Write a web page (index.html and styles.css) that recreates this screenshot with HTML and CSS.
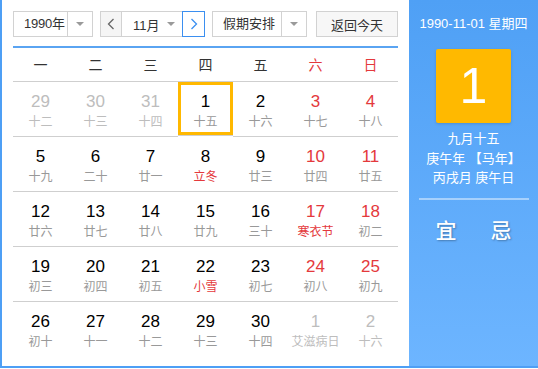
FILE: index.html
```html
<!DOCTYPE html>
<html lang="zh-CN">
<head>
<meta charset="UTF-8">
<title>万年历</title>
<link rel="stylesheet" href="styles.css">
</head>
<body>
<div class="calendar">
  <div class="main">
    <div class="toolbar">
      <div class="select year">
        <span class="select-text">1990年</span>
        <span class="select-arrow"><i class="caret"></i></span>
      </div>
      <div class="month-group">
        <span class="nav prev">
          <svg width="8" height="12" viewBox="0 0 8 12"><path d="M6.5 1 L1.5 6 L6.5 11" fill="none" stroke="#666" stroke-width="1.3"/></svg>
        </span>
        <span class="month-text">11月<i class="caret"></i></span>
        <span class="nav next">
          <svg width="8" height="12" viewBox="0 0 8 12"><path d="M1.5 1 L6.5 6 L1.5 11" fill="none" stroke="#3b8ff0" stroke-width="1.3"/></svg>
        </span>
      </div>
      <div class="select holiday">
        <span class="select-text">假期安排</span>
        <span class="select-arrow"><i class="caret"></i></span>
      </div>
      <div class="today-btn">返回今天</div>
    </div>

    <div class="week-head">
      <span>一</span><span>二</span><span>三</span><span>四</span><span>五</span>
      <span class="red">六</span><span class="red">日</span>
    </div>

    <div class="days">
      <div class="day other"><b>29</b><em>十二</em></div>
      <div class="day other"><b>30</b><em>十三</em></div>
      <div class="day other"><b>31</b><em>十四</em></div>
      <div class="day selected"><b>1</b><em>十五</em></div>
      <div class="day"><b>2</b><em>十六</em></div>
      <div class="day weekend"><b>3</b><em>十七</em></div>
      <div class="day weekend"><b>4</b><em>十八</em></div>

      <div class="day"><b>5</b><em>十九</em></div>
      <div class="day"><b>6</b><em>二十</em></div>
      <div class="day"><b>7</b><em>廿一</em></div>
      <div class="day festival"><b>8</b><em>立冬</em></div>
      <div class="day"><b>9</b><em>廿三</em></div>
      <div class="day weekend"><b>10</b><em>廿四</em></div>
      <div class="day weekend"><b>11</b><em>廿五</em></div>

      <div class="day"><b>12</b><em>廿六</em></div>
      <div class="day"><b>13</b><em>廿七</em></div>
      <div class="day"><b>14</b><em>廿八</em></div>
      <div class="day"><b>15</b><em>廿九</em></div>
      <div class="day"><b>16</b><em>三十</em></div>
      <div class="day weekend festival"><b>17</b><em>寒衣节</em></div>
      <div class="day weekend"><b>18</b><em>初二</em></div>

      <div class="day"><b>19</b><em>初三</em></div>
      <div class="day"><b>20</b><em>初四</em></div>
      <div class="day"><b>21</b><em>初五</em></div>
      <div class="day festival"><b>22</b><em>小雪</em></div>
      <div class="day"><b>23</b><em>初七</em></div>
      <div class="day weekend"><b>24</b><em>初八</em></div>
      <div class="day weekend"><b>25</b><em>初九</em></div>

      <div class="day last"><b>26</b><em>初十</em></div>
      <div class="day last"><b>27</b><em>十一</em></div>
      <div class="day last"><b>28</b><em>十二</em></div>
      <div class="day last"><b>29</b><em>十三</em></div>
      <div class="day last"><b>30</b><em>十四</em></div>
      <div class="day last other"><b>1</b><em>艾滋病日</em></div>
      <div class="day last other"><b>2</b><em>十六</em></div>
    </div>
  </div>

  <div class="side">
    <div class="side-date">1990-11-01 星期四</div>
    <div class="big-day">1</div>
    <div class="lunar-info">
      <p>九月十五</p>
      <p>庚午年 【马年】</p>
      <p>丙戌月 庚午日</p>
    </div>
    <div class="side-line"></div>
    <div class="yi-ji">
      <span>宜</span>
      <span>忌</span>
    </div>
  </div>
</div>
</body>
</html>
```

FILE: styles.css
```css
body {
  margin: 0;
  padding: 0;
  background-color: #fff;
  font-family: "Liberation Sans", Arial, "Noto Sans CJK SC", sans-serif;
  color: #333;
}

.calendar {
  display: flex;
  width: 538px;
  height: 368px;
  box-sizing: border-box;
  border-left: 2px solid #4e9ff5;
  border-bottom: 2px solid #4e9ff5;
}

.main {
  width: 407px;
  padding: 11px 11px 0 11px;
  box-sizing: border-box;
  background-color: #fff;
}

/* 工具栏 */
.toolbar {
  display: flex;
  height: 26px;
  font-size: 13px;
}

.select,
.month-group,
.today-btn {
  display: flex;
  align-items: center;
  height: 26px;
  box-sizing: border-box;
  border: 1px solid #d2d2d2;
  background-color: #fff;
}

.select-text {
  flex: 1;
  padding-left: 11px;
  line-height: 24px;
}

.select-arrow {
  display: flex;
  align-items: center;
  justify-content: center;
  width: 24px;
  height: 24px;
  border-left: 1px solid #d2d2d2;
}

.caret {
  display: inline-block;
  width: 0;
  height: 0;
  border-left: 4px solid transparent;
  border-right: 4px solid transparent;
  border-top: 4px solid #9a9a9a;
}

.year {
  width: 80px;
}

.year .select-text {
  padding-left: 10px;
  letter-spacing: -0.2px;
}

.month-group {
  width: 105px;
  margin-left: 7px;
  border: none;
}

.nav {
  display: flex;
  align-items: center;
  justify-content: center;
  width: 22px;
  height: 26px;
  box-sizing: border-box;
  border: 1px solid #d2d2d2;
  background-color: #f5f5f5;
}

.nav.next {
  width: 23px;
  border-color: #3b8ff0;
  background-color: #fff;
}

.month-text {
  display: flex;
  align-items: center;
  flex: 1;
  height: 26px;
  box-sizing: border-box;
  padding-left: 11px;
  border-top: 1px solid #d2d2d2;
  border-bottom: 1px solid #d2d2d2;
}

.month-text .caret {
  margin-left: 7px;
}

.holiday {
  width: 95px;
  margin-left: 7px;
}

.holiday .select-text {
  padding-left: 10px;
}

.today-btn {
  justify-content: center;
  width: 82px;
  margin-left: 9px;
  background-color: #f7f7f7;
}

/* 星期表头 */
.week-head {
  display: grid;
  grid-template-columns: repeat(7, 55px);
  height: 33px;
  margin-top: 9px;
  border-top: 2px solid #5aa4f2;
  border-bottom: 1px solid #cfcfcf;
  font-size: 14px;
  font-family: "Noto Sans CJK SC", sans-serif;
}

.week-head span {
  text-align: center;
  line-height: 33px;
}

.red {
  color: #e4393c;
}

/* 日期 */
.days {
  display: grid;
  grid-template-columns: repeat(7, 55px);
}

.day {
  display: flex;
  flex-direction: column;
  align-items: center;
  height: 55px;
  box-sizing: border-box;
  padding-top: 10px;
  border-bottom: 1px solid #cfcfcf;
}

.day.last {
  border-bottom: none;
}

.day b {
  font-weight: normal;
  font-size: 17px;
  line-height: 20px;
  color: #000;
}

.day em {
  font-style: normal;
  font-size: 12px;
  line-height: 18px;
  color: #999;
  font-family: "Noto Sans CJK SC", sans-serif;
}

.day.weekend b {
  color: #e4393c;
}

.day.festival em {
  color: #e4393c;
}

.day.other b,
.day.other em {
  color: #bdbdbd;
}

.day.selected {
  box-shadow: inset 0 0 0 3px #ffb800;
  height: 54px;
}

/* 右侧面板 */
.side {
  flex: 1;
  display: flex;
  flex-direction: column;
  align-items: center;
  background: linear-gradient(#4fa0f5, #6db5ff);
  color: #fff;
  font-family: "Liberation Sans", Arial, "Noto Sans CJK SC", sans-serif;
}

.side-date {
  margin-top: 15px;
  font-size: 13px;
  line-height: 18px;
}

.big-day {
  width: 75px;
  height: 74px;
  margin-top: 16px;
  border-radius: 2px;
  background-color: #ffb900;
  text-align: center;
  font-size: 50px;
  line-height: 74px;
  box-shadow: 0 1px 3px rgba(0, 0, 0, 0.15);
}

.lunar-info {
  margin-top: 6px;
  text-align: center;
  font-size: 13px;
}

.lunar-info p {
  margin: 0;
  line-height: 19.5px;
}

.side-line {
  width: 110px;
  height: 2px;
  margin-top: 10px;
  background-color: rgba(255, 255, 255, 0.45);
}

.yi-ji {
  display: flex;
  gap: 34px;
  margin-top: 14px;
  font-size: 21px;
  font-family: "Noto Sans CJK SC", sans-serif;
  font-weight: 500;
  text-shadow: 1px 1px 2px rgba(0, 0, 0, 0.3);
}
```
